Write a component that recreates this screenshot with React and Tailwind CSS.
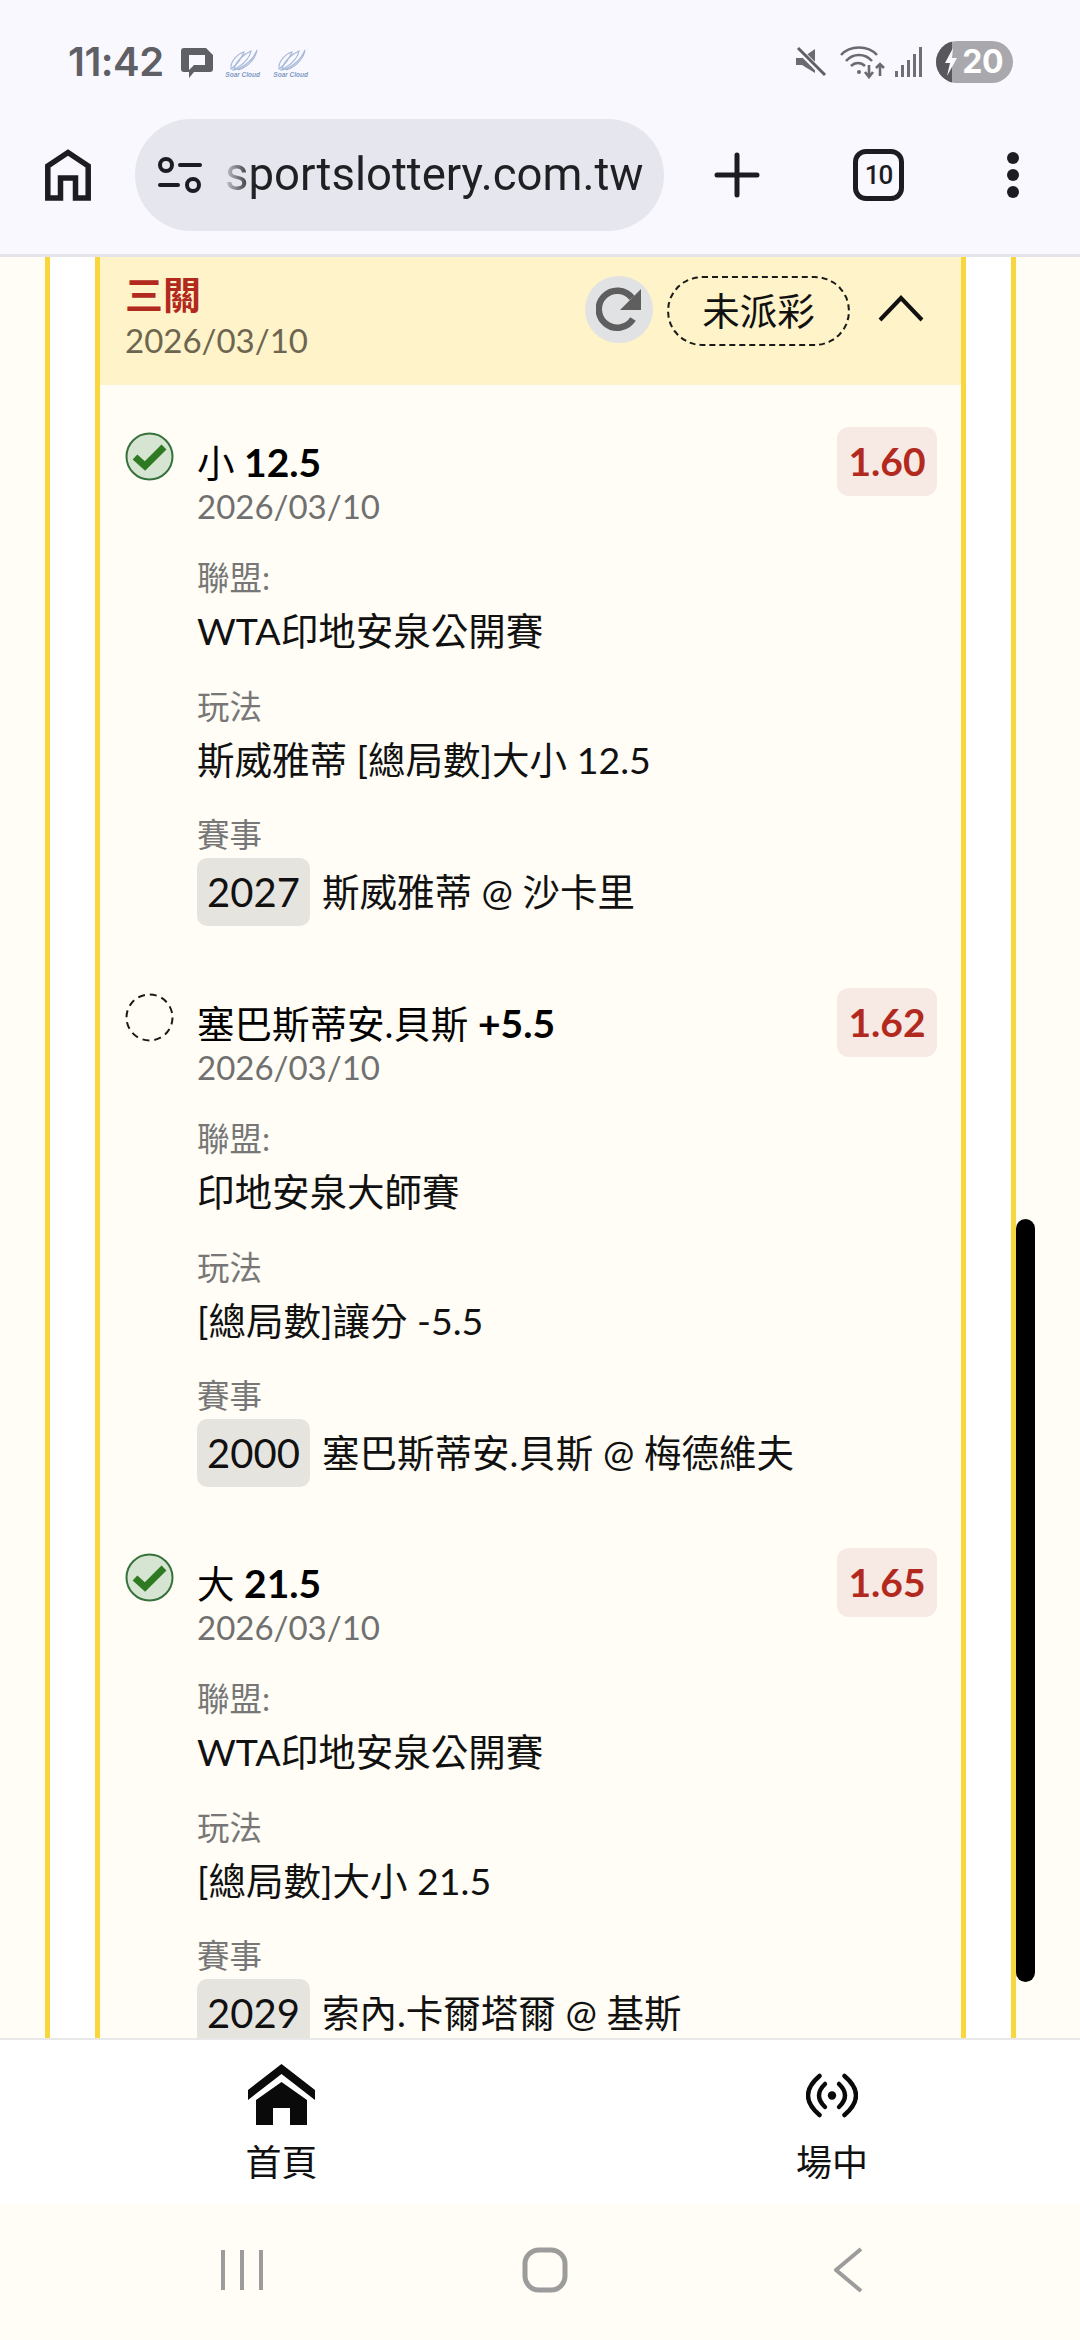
const items = [
  { done: true, name: "小", val: "12.5", odds: "1.60", league: "WTA印地安泉公開賽", play: "斯威雅蒂 [總局數]大小 12.5", id: "2027", teams: "斯威雅蒂 @ 沙卡里" },
  { done: false, name: "塞巴斯蒂安.貝斯", val: "+5.5", odds: "1.62", league: "印地安泉大師賽", play: "[總局數]讓分 -5.5", id: "2000", teams: "塞巴斯蒂安.貝斯 @ 梅德維夫" },
  { done: true, name: "大", val: "21.5", odds: "1.65", league: "WTA印地安泉公開賽", play: "[總局數]大小 21.5", id: "2029", teams: "索內.卡爾塔爾 @ 基斯" },
];

function SoarLogo() {
  return (
    <div className="flex flex-col items-center w-[34px] h-[30px]">
      <svg width="30" height="22" viewBox="0 0 30 22" fill="none" stroke="#a3b7d6" strokeWidth="1.1">
        <path d="M3 20C2 13 9 5 16 3C14 8 10 15 3 20Z" />
        <path d="M6 20C8 12 16 5 23 2C22 8 15 17 6 20Z" />
        <path d="M4 21C12 21 24 13 29 1C28 9 20 18 10 21" />
      </svg>
      <span className="text-[6.5px] leading-[8px] italic font-bold text-[#8299c4] whitespace-nowrap font-['Liberation_Sans',sans-serif]">Soar Cloud</span>
    </div>
  );
}

function StatusBar() {
  return (
    <div className="h-[119px] flex items-start justify-between pl-[68px] pr-[67px] pt-[41px]">
      <div className="flex items-center gap-[17px] h-[42px]">
        <span className="text-[40px] leading-[42px] font-semibold text-[#5f5f66] font-['Inter',sans-serif] tracking-[-0.5px]">11:42</span>
        <svg width="32" height="32" viewBox="0 0 32 32" className="mt-[2px]">
          <path d="M3 1H25L32 8V22Q32 25 29 25H13L8 31V25H3Q0 25 0 22V4Q0 1 3 1Z" fill="#5f5f66" />
          <path d="M8 8H24V18H13L8 23Z" fill="#f8f8fe" />
        </svg>
        <div className="flex gap-[14px] -ml-[4px] mt-[4px]">
          <SoarLogo />
          <SoarLogo />
        </div>
      </div>
      <div className="flex items-center h-[42px]">
        <svg width="32" height="32" viewBox="0 0 32 32" className="mr-[13px]">
          <path d="M1 12H7L20 3V27L7 19H1Z" fill="#6a6a70" />
          <path d="M3 3L30 30" stroke="#f8f8fe" strokeWidth="6" />
          <path d="M3 2L30 29" stroke="#5f5f66" strokeWidth="3" />
        </svg>
        <svg width="46" height="34" viewBox="0 0 46 34" fill="none" stroke="#6a6a70" strokeWidth="2.6" className="mr-[9px]">
          <path d="M1 10C10 0 28 0 37 10" />
          <path d="M6 16C13 8 25 8 32 16" />
          <path d="M11 21C15 17 21 17 25 21" />
          <circle cx="19" cy="27" r="2" fill="#6a6a70" stroke="none" />
          <path d="M29 20V32M25 27L29 32L33 27" />
          <path d="M40 31V19M36 23L40 19L44 23" />
        </svg>
        <svg width="28" height="30" viewBox="0 0 28 30" fill="#6f6f75" className="mr-[13px]">
          <rect x="0" y="24" width="3" height="6" />
          <rect x="6" y="18" width="3" height="12" />
          <rect x="12" y="13" width="3" height="17" />
          <rect x="18" y="7" width="3" height="23" />
          <rect x="24" y="0" width="3" height="30" />
        </svg>
        <div className="relative w-[77px] h-[42px] rounded-full bg-[#a9a9ad] overflow-hidden flex items-center justify-end pr-[10px]">
          <div className="absolute left-0 top-0 h-full w-[16px] bg-[#58585c]" />
          <svg width="14" height="28" viewBox="0 0 14 28" className="absolute left-[8px] top-[7px]">
            <path d="M9 0L1 15H6L3 28L13 10H8Z" fill="#f8f8fe" />
          </svg>
          <span className="text-[32px] leading-[42px] font-bold text-white font-['Inter',sans-serif] tracking-[-0.5px]">20</span>
        </div>
      </div>
    </div>
  );
}

function Toolbar() {
  return (
    <div className="h-[138px] flex items-start relative border-b-[3px] border-[#e4e4ea]">
      <svg width="46" height="52" viewBox="0 0 46 52" fill="none" stroke="#1c1c22" strokeWidth="5.5" className="ml-[45px] mt-[30px] shrink-0">
        <path d="M2.8 49V17L23 3.5L43.2 17V49H30.5V29H15.5V49Z" strokeLinejoin="miter" />
      </svg>
      <div className="ml-[44px] w-[529px] h-[112px] rounded-full bg-[#e6e6ee] flex items-center pl-[23px] shrink-0">
        <svg width="44" height="36" viewBox="0 0 44 36" fill="none" stroke="#1c1c22" strokeWidth="4" className="shrink-0">
          <circle cx="8" cy="8" r="6" />
          <path d="M22 8H42M2 28H20" strokeLinecap="round" />
          <circle cx="35" cy="28" r="6" />
        </svg>
        <span className="ml-[23px] text-[45.5px] leading-[60px] font-['Roboto',sans-serif] whitespace-nowrap bg-gradient-to-r from-[#c8c8d0] from-0% to-[#1f1f24] to-[7%] bg-clip-text text-transparent">sportslottery.com.tw</span>
      </div>
      <svg width="46" height="46" viewBox="0 0 46 46" stroke="#1c1c22" strokeWidth="5" strokeLinecap="round" className="ml-[50px] mt-[33px] shrink-0">
        <path d="M23 3V43M3 23H43" />
      </svg>
      <div className="ml-[93px] mt-[30px] w-[51px] h-[52px] rounded-[13px] border-[5px] border-[#1c1c22] flex items-center justify-center shrink-0">
        <span className="text-[26px] leading-none text-[#1c1c22] font-medium font-['Roboto',sans-serif] tracking-[-1px]">10</span>
      </div>
      <div className="ml-[103px] mt-[33px] flex flex-col gap-[5px] shrink-0">
        <div className="w-[12px] h-[12px] rounded-full bg-[#1c1c22]" />
        <div className="w-[12px] h-[12px] rounded-full bg-[#1c1c22]" />
        <div className="w-[12px] h-[12px] rounded-full bg-[#1c1c22]" />
      </div>
    </div>
  );
}

function CheckIcon({ done }) {
  if (done) {
    return (
      <svg width="49" height="49" viewBox="0 0 49 49" fill="none">
        <circle cx="24.5" cy="24.5" r="23" fill="#d6e4d2" stroke="#35713a" strokeWidth="2" />
        <path d="M10 25L20 34L39 15" stroke="#2d7a22" strokeWidth="7" />
      </svg>
    );
  }
  return (
    <svg width="49" height="49" viewBox="0 0 49 49" fill="none">
      <circle cx="24.5" cy="24.5" r="23" stroke="#1a1a1a" strokeWidth="2" strokeDasharray="7 5" />
    </svg>
  );
}

function Item({ item }) {
  return (
    <div className="h-[560.5px] flex items-start pl-[25px] pr-[24px] shrink-0">
      <div className="w-[72px] pt-[5px] shrink-0">
        <CheckIcon done={item.done} />
      </div>
      <div className="flex-1 min-w-0 pt-[12px]">
        <div className="h-[46px] text-[37.5px] leading-[46px] text-black">
          {item.name} <span className="font-bold text-[39px]">{item.val}</span>
        </div>
        <div className="h-[43px] text-[33px] leading-[43px] text-[#707070]">2026/03/10</div>
        <div className="mt-[30px] h-[40px] text-[32.5px] leading-[40px] text-[#777]">聯盟:</div>
        <div className="mt-[8px] h-[50px] text-[37.5px] leading-[50px] text-[#111]">{item.league}</div>
        <div className="mt-[31px] h-[40px] text-[32.5px] leading-[40px] text-[#777]">玩法</div>
        <div className="mt-[8px] h-[50px] text-[37.5px] leading-[50px] text-[#111]">{item.play}</div>
        <div className="mt-[30px] h-[40px] text-[32.5px] leading-[40px] text-[#777]">賽事</div>
        <div className="mt-[3px] flex items-center h-[68px] text-[37.5px] leading-[50px] text-[#111]">
          <span className="w-[113px] h-[68px] rounded-[10px] bg-[#e5e4df] flex items-center justify-center text-[40px] shrink-0">{item.id}</span>
          <span className="ml-[12px] whitespace-nowrap">{item.teams}</span>
        </div>
      </div>
      <div className="w-[100px] h-[69px] rounded-[12px] bg-[#f7e9e4] flex items-center justify-center text-[39px] font-bold text-[#b22a1e] shrink-0">
        {item.odds}
      </div>
    </div>
  );
}

function Card() {
  return (
    <div className="h-full ml-[45px] mr-[64px] border-x-[5px] border-[#f8d63c] bg-white px-[45px]">
      <div className="h-full border-x-[5px] border-[#f8d63c] bg-[#fffdf5] overflow-hidden flex flex-col">
        <div className="h-[128px] bg-[#fff3c9] flex items-start pl-[25px] shrink-0">
          <div className="flex-1 pt-[14px]">
            <div className="text-[38px] leading-[46px] font-bold text-[#b22a1e]">三關</div>
            <div className="text-[33px] leading-[40px] text-[#6c6650] mt-[3px]">2026/03/10</div>
          </div>
          <div className="mt-[19px] w-[68px] h-[67px] rounded-full bg-[#e0e2e4] flex items-center justify-center shrink-0">
            <svg width="46" height="46" viewBox="0 0 46 46" fill="none">
              <path d="M37 32A18.5 18.5 0 1 1 36 11" stroke="#5e5e5e" strokeWidth="6.5" />
              <path d="M45 2V23H24Z" fill="#5e5e5e" />
            </svg>
          </div>
          <div className="ml-[14px] mt-[19px] w-[183px] h-[70px] rounded-full border-2 border-dashed border-[#1a1a1a] flex items-center justify-center text-[37.5px] text-[#111] shrink-0">
            未派彩
          </div>
          <svg width="46" height="28" viewBox="0 0 46 28" fill="none" stroke="#111" strokeWidth="4" className="ml-[28px] mt-[38px] mr-[37px] shrink-0">
            <path d="M2 25L23 3L44 25" />
          </svg>
        </div>
        <div className="pt-[42px] flex flex-col">
          {items.map((it) => (
            <Item key={it.id} item={it} />
          ))}
        </div>
      </div>
    </div>
  );
}

function BottomNav() {
  return (
    <div className="h-[167px] bg-white border-t-[2px] border-[#e8e8e8] flex shrink-0">
      <div className="w-[563px] flex flex-col items-center pt-[24px]">
        <svg width="67" height="62" viewBox="0 0 67 62" fill="#0a0a0a">
          <path d="M33.5 0L67 26V36L33.5 10L0 36V26Z" />
          <path d="M33.5 18L59 36V61H42V44H25V61H8V36Z" />
        </svg>
        <span className="mt-[13px] text-[36px] leading-[46px] text-[#111]">首頁</span>
      </div>
      <div className="ml-[21px] flex-1 flex flex-col items-center pt-[24px]">
        <svg width="52" height="62" viewBox="0 0 52 62" fill="none" stroke="#0a0a0a" strokeWidth="4.5" strokeLinecap="round">
          <circle cx="26" cy="31.5" r="4.2" fill="#0a0a0a" stroke="none" />
          <path d="M19 20Q7 31.5 19 43M33 20Q45 31.5 33 43" />
          <path d="M13.5 12Q-9.5 31.5 13.5 51M38.5 12Q61.5 31.5 38.5 51" />
        </svg>
        <span className="mt-[13px] text-[36px] leading-[46px] text-[#111]">場中</span>
      </div>
    </div>
  );
}

function SystemNav() {
  return (
    <div className="h-[135px] bg-[#fffdf5] flex items-start shrink-0 pt-[43px]">
      <svg width="42" height="44" viewBox="0 0 42 44" stroke="#9c9c9c" strokeWidth="4" className="ml-[221px] shrink-0">
        <path d="M2 2V42M21 2V42M40 2V42" />
      </svg>
      <svg width="46" height="46" viewBox="0 0 46 46" fill="none" stroke="#9c9c9c" strokeWidth="5" className="ml-[259px] -mt-[1px] shrink-0">
        <rect x="3" y="3" width="40" height="40" rx="14" />
      </svg>
      <svg width="30" height="46" viewBox="0 0 30 46" fill="none" stroke="#9c9c9c" strokeWidth="4" strokeLinejoin="round" className="ml-[265px] -mt-[1px] shrink-0">
        <path d="M28 2L3 23L28 44" />
      </svg>
    </div>
  );
}

export default function App() {
  return (
    <div className="w-[1080px] h-[2340px] flex flex-col overflow-hidden bg-[#fffdf5] font-['Lato','Noto_Sans_CJK_TC',sans-serif]">
      <div className="bg-[#f8f8fe] shrink-0">
        <StatusBar />
        <Toolbar />
      </div>
      <div className="flex-1 min-h-0 relative overflow-hidden">
        <Card />
        <div className="absolute left-[1016px] top-[962px] w-[19px] h-[763px] rounded-full bg-black" />
      </div>
      <BottomNav />
      <SystemNav />
    </div>
  );
}
